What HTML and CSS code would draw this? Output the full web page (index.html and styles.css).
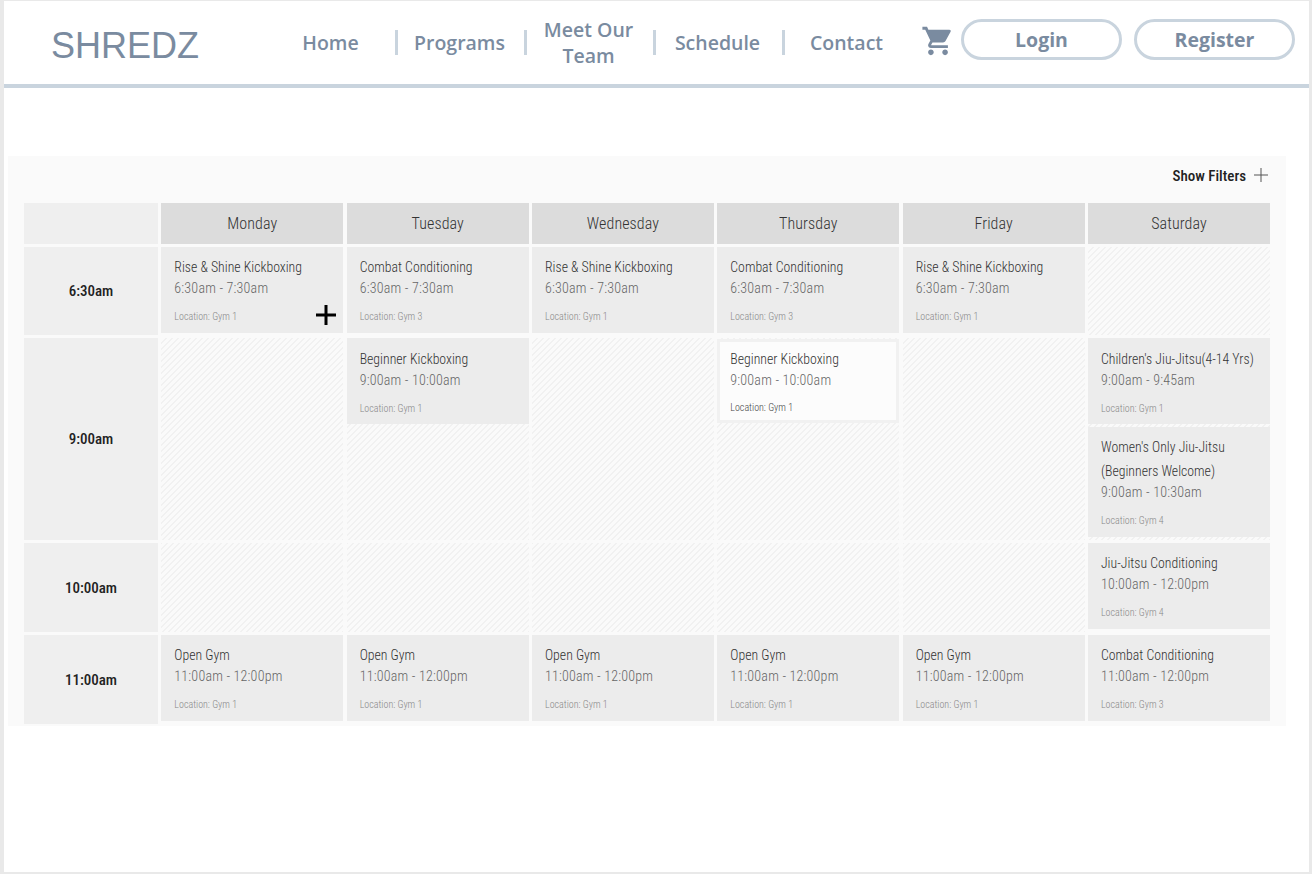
FILE: index.html
```html
<!DOCTYPE html>
<html lang="en">
  <head>
    <meta charset="UTF-8" />
    <title>SHREDZ - Schedule</title>
    <link rel="stylesheet" href="styles.css">
  </head>
  <body>
    <div class="page">
      <header class="top-bar">
        <div class="logo">SHREDZ</div>
        <nav class="nav">
          <a class="nav-link">Home</a>
          <a class="nav-link">Programs</a>
          <a class="nav-link">Meet Our Team</a>
          <a class="nav-link">Schedule</a>
          <a class="nav-link">Contact</a>
        </nav>
        <svg class="cart" viewBox="0 0 24 24" aria-hidden="true">
          <path d="M7 18c-1.1 0-1.99.9-1.99 2S5.900 22 7 22s2-.9 2-2-.9-2-2-2zM1 2v2h2l3.600 7.590-1.350 2.450c-.16.28-.25.61-.25.96 0 1.100.9 2 2 2h12v-2H7.420c-.14 0-.25-.11-.25-.25l.03-.12.9-1.630h7.450c.75 0 1.410-.41 1.750-1.030l3.580-6.490A1 1 0 0 0 20 4H5.210l-.94-2H1zm16 16c-1.100 0-1.990.9-1.990 2s.89 2 1.990 2 2-.9 2-2-.9-2-2-2z" />
        </svg>
        <a class="pill">Login</a>
        <a class="pill">Register</a>
      </header>

      <main class="panel">
        <div class="toolbar">
          <span>Show Filters</span>
          <svg class="filter-plus" viewBox="0 0 14 14" aria-hidden="true">
            <path d="M7 0v14M0 7h14" />
          </svg>
        </div>

        <div class="schedule">
          <div class="corner"></div>
          <div class="day">Monday</div>
          <div class="day">Tuesday</div>
          <div class="day">Wednesday</div>
          <div class="day">Thursday</div>
          <div class="day">Friday</div>
          <div class="day">Saturday</div>

          <div class="time">6:30am</div>
          <div class="slot">
            <div class="card">
              <div class="card-title">Rise &amp; Shine Kickboxing</div>
              <div class="card-hours">6:30am - 7:30am</div>
              <div class="card-place">Location: Gym 1</div>
              <svg class="add-cursor" viewBox="0 0 20 20" aria-hidden="true">
                <path d="M10 0v20M0 10h20" />
              </svg>
            </div>
          </div>
          <div class="slot">
            <div class="card">
              <div class="card-title">Combat Conditioning</div>
              <div class="card-hours">6:30am - 7:30am</div>
              <div class="card-place">Location: Gym 3</div>
            </div>
          </div>
          <div class="slot">
            <div class="card">
              <div class="card-title">Rise &amp; Shine Kickboxing</div>
              <div class="card-hours">6:30am - 7:30am</div>
              <div class="card-place">Location: Gym 1</div>
            </div>
          </div>
          <div class="slot">
            <div class="card">
              <div class="card-title">Combat Conditioning</div>
              <div class="card-hours">6:30am - 7:30am</div>
              <div class="card-place">Location: Gym 3</div>
            </div>
          </div>
          <div class="slot">
            <div class="card">
              <div class="card-title">Rise &amp; Shine Kickboxing</div>
              <div class="card-hours">6:30am - 7:30am</div>
              <div class="card-place">Location: Gym 1</div>
            </div>
          </div>
          <div class="slot hatch"></div>

          <div class="time">9:00am</div>
          <div class="slot hatch"></div>
          <div class="slot hatch">
            <div class="card">
              <div class="card-title">Beginner Kickboxing</div>
              <div class="card-hours">9:00am - 10:00am</div>
              <div class="card-place">Location: Gym 1</div>
            </div>
          </div>
          <div class="slot hatch"></div>
          <div class="slot hatch">
            <div class="card card-active">
              <div class="card-title">Beginner Kickboxing</div>
              <div class="card-hours">9:00am - 10:00am</div>
              <div class="card-place">Location: Gym 1</div>
            </div>
          </div>
          <div class="slot hatch"></div>
          <div class="slot hatch">
            <div class="card">
              <div class="card-title">Children's Jiu-Jitsu(4-14 Yrs)</div>
              <div class="card-hours">9:00am - 9:45am</div>
              <div class="card-place">Location: Gym 1</div>
            </div>
            <div class="card">
              <div class="card-title">Women's Only Jiu-Jitsu<br>(Beginners Welcome)</div>
              <div class="card-hours">9:00am - 10:30am</div>
              <div class="card-place">Location: Gym 4</div>
            </div>
          </div>

          <div class="time">10:00am</div>
          <div class="slot hatch"></div>
          <div class="slot hatch"></div>
          <div class="slot hatch"></div>
          <div class="slot hatch"></div>
          <div class="slot hatch"></div>
          <div class="slot">
            <div class="card">
              <div class="card-title">Jiu-Jitsu Conditioning</div>
              <div class="card-hours">10:00am - 12:00pm</div>
              <div class="card-place">Location: Gym 4</div>
            </div>
          </div>

          <div class="time">11:00am</div>
          <div class="slot">
            <div class="card">
              <div class="card-title">Open Gym</div>
              <div class="card-hours">11:00am - 12:00pm</div>
              <div class="card-place">Location: Gym 1</div>
            </div>
          </div>
          <div class="slot">
            <div class="card">
              <div class="card-title">Open Gym</div>
              <div class="card-hours">11:00am - 12:00pm</div>
              <div class="card-place">Location: Gym 1</div>
            </div>
          </div>
          <div class="slot">
            <div class="card">
              <div class="card-title">Open Gym</div>
              <div class="card-hours">11:00am - 12:00pm</div>
              <div class="card-place">Location: Gym 1</div>
            </div>
          </div>
          <div class="slot">
            <div class="card">
              <div class="card-title">Open Gym</div>
              <div class="card-hours">11:00am - 12:00pm</div>
              <div class="card-place">Location: Gym 1</div>
            </div>
          </div>
          <div class="slot">
            <div class="card">
              <div class="card-title">Open Gym</div>
              <div class="card-hours">11:00am - 12:00pm</div>
              <div class="card-place">Location: Gym 1</div>
            </div>
          </div>
          <div class="slot">
            <div class="card">
              <div class="card-title">Combat Conditioning</div>
              <div class="card-hours">11:00am - 12:00pm</div>
              <div class="card-place">Location: Gym 3</div>
            </div>
          </div>
        </div>
      </main>
    </div>
  </body>
</html>
```

FILE: styles.css
```css
:root {
  --slate: #7a8ba0;
  --slate-line: #c9d4de;
  --frame: #e9e9e9;
  --cell: #ececec;
  --narrow: Roboto, sans-serif;
}

html,
body {
  margin: 0;
  background-color: #fff;
}

.page {
  box-sizing: border-box;
  height: 874px;
  border: solid var(--frame);
  border-width: 1px 3px 2px 4px;
  overflow: hidden;
}

.top-bar {
  box-sizing: border-box;
  display: flex;
  align-items: center;
  height: 87px;
  border-bottom: 4px solid var(--slate-line);
  color: var(--slate);
}

.logo {
  width: 215px;
  margin: 6px 0 0 47px;
  font-family: "Liberation Sans", Arial, sans-serif;
  font-size: 36px;
}

.nav {
  display: flex;
  align-items: center;
  width: 645px;
}

.nav-link {
  box-sizing: border-box;
  position: relative;
  width: 129px;
  padding: 0 15px;
  font-family: "Open Sans", sans-serif;
  font-size: 19.5px;
  font-weight: 600;
  line-height: 26px;
  text-align: center;
}

/* short rules between the links */
.nav-link + .nav-link::before {
  content: "";
  position: absolute;
  left: 0;
  top: 50%;
  width: 3px;
  height: 25px;
  margin-top: -13px;
  background-color: var(--slate-line);
}

.cart {
  width: 34px;
  height: 34px;
  margin: 0 6px 4px 10px;
  fill: var(--slate);
}

.pill {
  box-sizing: border-box;
  width: 161px;
  height: 41px;
  margin: 0 12px 7px 0;
  border: 3px solid var(--slate-line);
  border-radius: 21px;
  font-family: "Open Sans", sans-serif;
  font-size: 19.5px;
  font-weight: 700;
  line-height: 35px;
  text-align: center;
}

.panel {
  box-sizing: border-box;
  width: 1278px;
  height: 570px;
  margin: 68px 0 0 4px;
  padding: 0 16px;
  background-color: #fafafa;
  overflow: hidden;
}

.toolbar {
  box-sizing: border-box;
  display: flex;
  justify-content: flex-end;
  align-items: center;
  gap: 8px;
  height: 47px;
  padding: 0 2px 7px 0;
  font-family: var(--narrow);
  font-stretch: 75%;
  font-size: 15px;
  font-weight: 500;
  color: #222;
}

.filter-plus {
  width: 14px;
  height: 14px;
  margin-bottom: 2px;
  stroke: #555;
  stroke-width: 1;
  fill: none;
}

.schedule {
  display: grid;
  grid-template-columns: 134px repeat(6, 182px);
  grid-template-rows: 41px 88px 202px 89px 89px;
  gap: 3px 3.33px;
  font-family: var(--narrow);
  font-stretch: 75%;
}

.corner {
  background-color: #efefef;
}

.day {
  display: flex;
  justify-content: center;
  align-items: center;
  background-color: #dcdcdc;
  font-size: 16px;
  font-weight: 300;
  letter-spacing: 0.1px;
  color: #333;
}

.time {
  display: flex;
  justify-content: center;
  align-items: center;
  background-color: #efefef;
  font-size: 15px;
  font-weight: 500;
  color: #222;
}

.slot {
  display: flex;
  flex-direction: column;
  gap: 3px;
}

.hatch {
  background-color: #f7f7f7;
  background-image: repeating-linear-gradient(-45deg, #f1f1f1 0 1.4142px, #fafafa 1.4142px 4.2426px);
}

.card {
  box-sizing: border-box;
  position: relative;
  padding: 8px 8px 9px 13px;
  background-color: var(--cell);
}

.hatch > .card:first-child {
  padding: 9px 8px 8px 13px;
}

.hatch > .card-active:first-child {
  height: 84px;
  margin-top: 1px;
  padding: 5px 4px 4px 10px;
  border: 3px solid #f1f1f1;
  background-color: #fcfcfc;
}

.card-title {
  font-size: 13.8px;
  font-weight: 300;
  line-height: 24px;
  color: #333;
}

.card-hours {
  font-size: 14px;
  font-weight: 300;
  letter-spacing: 0.2px;
  line-height: 19px;
  color: #666;
}

.card-place {
  margin-top: 12px;
  font-size: 10px;
  font-weight: 300;
  line-height: 14px;
  color: #888;
}

.card-active .card-place {
  margin-top: 11px;
  color: #444;
}

.add-cursor {
  position: absolute;
  right: 7px;
  bottom: 8px;
  width: 20px;
  height: 20px;
  stroke: #000;
  stroke-width: 3;
  fill: none;
}
```
